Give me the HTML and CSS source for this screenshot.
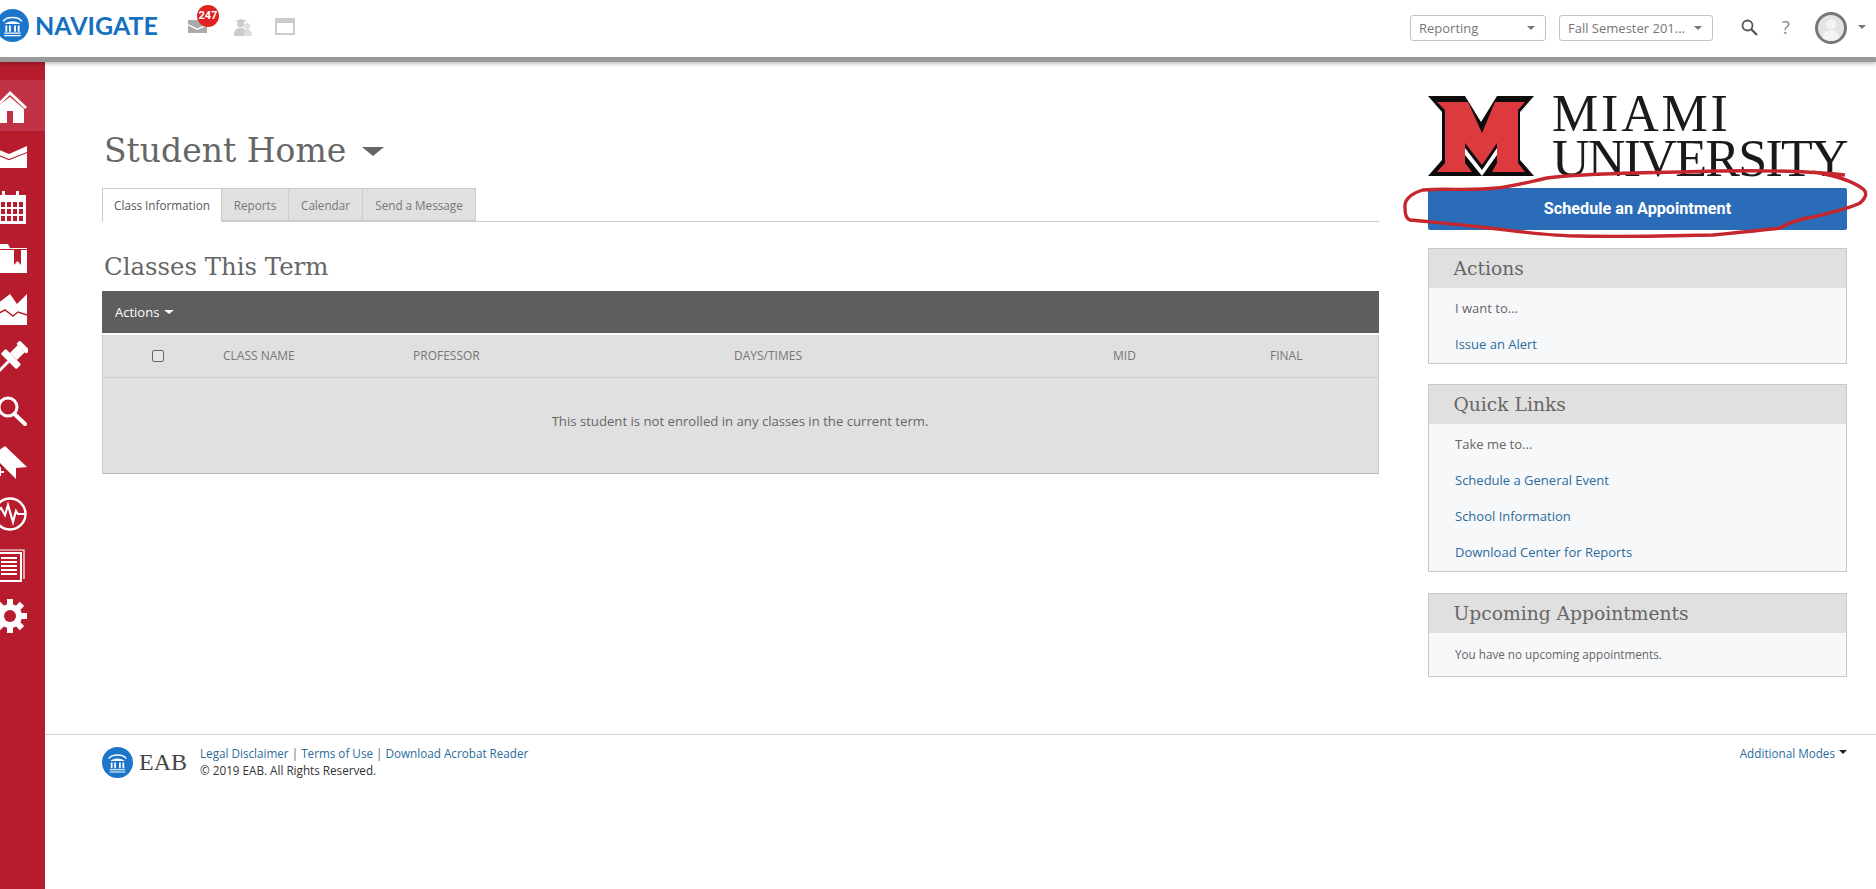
FILE: index.html
```html
<!DOCTYPE html>
<html lang="en">
<head>
<meta charset="utf-8">
<title>Navigate - Student Home</title>
<link rel="stylesheet" href="styles.css">
</head>
<body>
<svg class="defs" width="0" height="0">
  <symbol id="bank" viewBox="0 0 32 32">
    <circle cx="16" cy="16" r="16" fill="#1b75c9"/>
    <path d="M7 12C10 7 22 7 25 12" fill="none" stroke="#fff" stroke-width="1.5"/>
    <path d="M8.500 14.500C12 11 20 11 23.500 14.500Z" fill="#fff"/>
    <path d="M10 16v6M13.500 16v6M18.500 16v6M22 16v6" stroke="#fff" stroke-width="1.800"/>
    <path d="M8 23.500h16M8 25.800h16" stroke="#fff" stroke-width="1.200"/>
  </symbol>
</svg>

<header class="topbar">
  <div class="brand">
    <svg class="brand-mark"><use href="#bank"/></svg>
    <span class="brand-name">NAVIGATE</span>
  </div>
  <div class="top-icons">
    <div class="mail">
      <svg class="mail-icon" viewBox="0 0 19 13"><path d="M0 0H19V4L9.500 8.500 0 4Z" fill="#aaa"/><path d="M0 5.500L9.500 10 19 5.500V13H0Z" fill="#aaa"/></svg>
      <span class="badge">247</span>
    </div>
    <svg class="people-icon" viewBox="0 0 18 18">
      <circle cx="6.500" cy="6" r="3.500" fill="#ccc"/><path d="M0 18c0-6 2-8 6.500-8S12 12 12 18Z" fill="#ccc"/>
      <circle cx="13" cy="8" r="3" fill="#ddd"/><path d="M10 18c0-5 1-7 3-7s5 2 5 7Z" fill="#ddd"/>
      <path d="M1 3L7 1l6 2-6 2Z" fill="#ccc"/>
    </svg>
    <div class="window-icon"></div>
  </div>
  <div class="top-right">
    <div class="select select-a"><span>Reporting</span><i class="caret"></i></div>
    <div class="select select-b"><span>Fall Semester 201...</span><i class="caret"></i></div>
    <svg class="search-icon" viewBox="0 0 17 17"><circle cx="6.500" cy="6.500" r="5" fill="none" stroke="#555" stroke-width="1.800"/><path d="M10.500 10.500L16 16" stroke="#555" stroke-width="2.400"/></svg>
    <span class="help">?</span>
    <div class="avatar"><svg viewBox="0 0 25 25"><circle cx="12.500" cy="9" r="5" fill="#f4f4f4"/><path d="M4 25c0-8 4-10 8.500-10S21 17 21 25Z" fill="#f4f4f4"/></svg></div>
    <i class="caret caret-user"></i>
  </div>
</header>

<div class="shell">
  <nav class="sidebar">
    <a class="side-item active"><svg viewBox="-8 -20 36 40"><path d="M-4 -1L10 -15 27 1 25 3 10 -11 -4 2Z" fill="#fff"/><path d="M-8 4L10 -9 24 3V17H13V5H7V17H-8Z" fill="#fff"/></svg></a>
    <a class="side-item"><svg viewBox="-8 -20 36 40"><path d="M-8 -10L9 -3 27 -11V-5L9 2-8 -5Z" fill="#fff"/><path d="M-8 -4L9 3.200 27 -4V11H-8Z" fill="#fff"/></svg></a>
    <a class="side-item"><svg viewBox="-8 -20 36 40"><path d="M-8 -13H26V16H-8Z" fill="#fff"/><path d="M2 -17h3v6h-3ZM16 -17h3v6h-3Z" fill="#fff"/><path class="cut" d="M1 -6h4v5H1ZM7 -6h4v5H7ZM13 -6h4v5h-4ZM19 -6h4v5h-4ZM1 1h4v5H1ZM7 1h4v5H7ZM13 1h4v5h-4ZM19 1h4v5h-4ZM1 8h4v5H1ZM7 8h4v5H7ZM13 8h4v5h-4ZM19 8h4v5h-4Z"/></svg></a>
    <a class="side-item"><svg viewBox="-8 -20 36 40"><path d="M-8 -15H8L10 -11H27V14H-8Z" fill="#fff"/><path class="cut" d="M-8 -10H27V-9H-8ZM14 -9H21V6L17.500 2 14 6Z"/></svg></a>
    <a class="side-item"><svg viewBox="-8 -20 36 40"><path d="M-8 -2L10 -16 17 -6 27 -16V15H-8Z" fill="#fff"/><path d="M-8 7L5 0 13 6 18 2 27 5" fill="none" stroke="#b71c2e" stroke-width="1.500"/></svg></a>
    <a class="side-item"><svg viewBox="-8 -20 36 40"><g transform="rotate(45 12 -3)"><rect x="5" y="-21" width="14" height="5" rx="1.500" fill="#fff"/><rect x="7" y="-16" width="10" height="11" fill="#fff"/><rect x="1" y="-5" width="22" height="7" rx="1.500" fill="#fff"/><rect x="10.500" y="2" width="3" height="17" fill="#fff"/></g></svg></a>
    <a class="side-item"><svg viewBox="-8 -20 36 40"><circle cx="8" cy="-5" r="9" fill="none" stroke="#fff" stroke-width="3"/><path d="M14.500 2L25 12" stroke="#fff" stroke-width="4" stroke-linecap="round"/></svg></a>
    <a class="side-item"><svg viewBox="-8 -20 36 40"><path d="M5 -17L27 4 16 5V16L-8 -8Z" fill="#fff"/><path d="M-4 8h8v2h-8ZM-1 4h2v9h-2Z" fill="#fff"/></svg></a>
    <a class="side-item"><svg viewBox="-8 -20 36 40"><circle cx="10" cy="0" r="15.500" fill="none" stroke="#fff" stroke-width="2.400"/><path d="M-5 -1L1 -6 5 1 8 -9 13 8 16 -3 18 0H25" fill="none" stroke="#fff" stroke-width="2.200"/></svg></a>
    <a class="side-item"><svg viewBox="-8 -20 36 40"><path d="M-4 -15H24V14" fill="none" stroke="#fff" stroke-width="1.200"/><rect x="-4" y="-12" width="25" height="28" fill="none" stroke="#fff" stroke-width="2"/><path d="M1 -7H17M1 -3H17M1 1H17M1 5H17M1 9H17" stroke="#fff" stroke-width="2"/></svg></a>
    <a class="side-item"><svg viewBox="-8 -20 36 40"><g fill="#fff"><circle cx="10" cy="0" r="12"/><rect x="7" y="-17" width="6" height="34"/><rect x="7" y="-17" width="6" height="34" transform="rotate(45 10 0)"/><rect x="7" y="-17" width="6" height="34" transform="rotate(90 10 0)"/><rect x="7" y="-17" width="6" height="34" transform="rotate(135 10 0)"/></g><circle class="cut" cx="10" cy="0" r="6"/></svg></a>
  </nav>

  <div class="page">
    <div class="content">
      <main class="primary">
        <h1 class="page-title">Student Home <i class="title-caret"></i></h1>
        <div class="tabs">
          <a class="tab tab-on tab-1">Class Information</a>
          <a class="tab tab-2">Reports</a>
          <a class="tab tab-3">Calendar</a>
          <a class="tab tab-4">Send a Message</a>
        </div>
        <h2 class="section-title">Classes This Term</h2>
        <div class="actions-bar"><span>Actions</span><i class="caret caret-white"></i></div>
        <div class="table">
          <div class="table-head">
            <span class="check-cell"><i class="checkbox"></i></span>
            <span>CLASS NAME</span>
            <span>PROFESSOR</span>
            <span>DAYS/TIMES</span>
            <span>MID</span>
            <span>FINAL</span>
          </div>
          <div class="table-empty">This student is not enrolled in any classes in the current term.</div>
        </div>
      </main>

      <aside class="aside">
        <div class="school-logo">
          <svg class="school-m" viewBox="0 0 106 80">
            <path d="M0 0H37L53 26 69 0H106L92 16V64L106 80H0L14 64V16Z" fill="#0c0c0c"/>
            <path d="M9 6H40L54 37 67 6H97L90 14V67L97 76H64L69 67V47L54 69 37 47V67L44 76H9L17 67V14Z" fill="#dd3a40"/>
            <path d="M37 52L54 74 69 52V59L54 80 37 59Z" fill="#fff"/>
          </svg>
          <div class="school-name"><span>MIAMI</span><span class="uni">UNIVERSITY</span></div>
        </div>
        <a class="primary-btn">Schedule an Appointment</a>
        <section class="panel">
          <h3>Actions</h3>
          <div class="panel-body"><p>I want to...</p><p><a>Issue an Alert</a></p></div>
        </section>
        <section class="panel">
          <h3>Quick Links</h3>
          <div class="panel-body"><p>Take me to...</p><p><a>Schedule a General Event</a></p><p><a>School Information</a></p><p><a>Download Center for Reports</a></p></div>
        </section>
        <section class="panel panel-last">
          <h3>Upcoming Appointments</h3>
          <div class="panel-body"><p class="small">You have no upcoming appointments.</p></div>
        </section>
      </aside>
    </div>

    <footer class="footer">
      <svg class="footer-mark"><use href="#bank"/></svg>
      <span class="footer-eab">EAB</span>
      <div class="footer-text">
        <div><a>Legal Disclaimer</a> <span class="pipe">|</span> <a>Terms of Use</a> <span class="pipe">|</span> <a>Download Acrobat Reader</a></div>
        <div class="copy">© 2019 EAB. All Rights Reserved.</div>
      </div>
      <div class="modes"><a>Additional Modes</a><i class="caret caret-black"></i></div>
    </footer>
  </div>
</div>

<svg class="scribble" viewBox="0 0 1876 889">
  <path d="M1845 175C1800 170 1740 170 1680 172C1620 173 1575 174 1547 178C1525 183 1510 187 1497 188C1470 191 1445 188 1423 190C1410 194 1404 200 1405 208C1405 215 1406 219 1410 220C1430 222 1455 224 1480 227C1510 230 1545 236 1580 236C1625 237 1670 236 1713 235C1745 232 1765 230 1780 228C1790 222 1800 219 1813 217C1830 213 1850 208 1860 203C1867 197 1867 192 1863 189C1855 183 1840 176 1813 172" fill="none" stroke="#c5272d" stroke-width="3.400"/>
</svg>
</body>
</html>
```
FILE: styles.css
```css
* { box-sizing: border-box; }
html, body { margin: 0; height: 100%; }
body {
  position: relative;
  height: 889px;
  overflow: hidden;
  display: flex;
  flex-direction: column;
  background: #fff;
  color: #666;
  font-family: "Open Sans", "Liberation Sans", sans-serif;
  font-size: 13px;
}
a { color: #2c6c9c; text-decoration: none; }
i { display: inline-block; }
.defs { position: absolute; }

.topbar {
  position: relative;
  z-index: 2;
  flex: none;
  height: 62px;
  display: flex;
  align-items: flex-start;
  background: #fff;
  border-bottom: 5px solid #999;
  box-shadow: 0 2px 4px rgba(0,0,0,.25);
}
.brand { display: flex; align-items: center; margin: 9px 0 0 -4px; }
.brand-mark { width: 33px; height: 33px; }
.brand-name {
  margin-left: 6px;
  color: #1471c0;
  font-family: "Lato", sans-serif;
  font-weight: 700;
  font-size: 25px;
  line-height: 33px;
}
.top-icons { display: flex; align-items: flex-start; margin-left: 30px; }
.mail { position: relative; width: 19px; height: 32px; }
.mail-icon { position: absolute; left: 0; top: 20px; width: 19px; height: 13px; }
.badge {
  position: absolute;
  left: 9px;
  top: 5px;
  width: 22px;
  height: 22px;
  border-radius: 50%;
  background: #dc2222;
  color: #fff;
  font-family: "Roboto", sans-serif;
  font-weight: 700;
  font-size: 11px;
  line-height: 22px;
  text-align: center;
}
.people-icon { width: 18px; height: 18px; margin: 18px 0 0 27px; }
.window-icon {
  width: 20px;
  height: 17px;
  margin: 18px 0 0 23px;
  border: 2px solid #ccc;
  border-top-width: 5px;
}
.top-right { display: flex; align-items: flex-start; margin-left: auto; }
.select {
  display: flex;
  align-items: center;
  justify-content: space-between;
  height: 26px;
  margin-top: 15px;
  padding: 0 10px 0 8px;
  border: 1px solid #c4c4c4;
  border-radius: 3px;
  color: #777;
  font-size: 13px;
  white-space: nowrap;
}
.select-a { width: 136px; }
.select-b { width: 154px; margin-left: 13px; }
.caret {
  width: 0;
  height: 0;
  border-left: 4px solid transparent;
  border-right: 4px solid transparent;
  border-top: 4px solid #777;
}
.search-icon { width: 17px; height: 17px; margin: 19px 0 0 28px; }
.help { margin: 15px 0 0 24px; width: 15px; color: #888; font-size: 18px; line-height: 25px; }
.avatar {
  width: 32px;
  height: 32px;
  margin: 12px 0 0 18px;
  border: 3px solid #777;
  border-radius: 50%;
  background: #e4e4e4;
  overflow: hidden;
}
.avatar svg { display: block; width: 26px; height: 26px; }
.caret-user { margin: 25px 10px 0 11px; }

.shell { flex: 1; display: flex; min-height: 0; }
.sidebar {
  flex: none;
  width: 45px;
  padding-top: 19px;
  background: #b71c2e;
  margin-top: -1px;
  overflow: hidden;
}
.side-item { display: flex; align-items: center; height: 51px; }
.side-item svg { flex: none; width: 36px; height: 40px; margin-left: -8px; }
.side-item.active { background: #c03245; }
.side-item.active .cut { fill: #c03245; }
.cut { fill: #b71c2e; }

.page { flex: 1; display: flex; flex-direction: column; min-width: 0; }
.content { display: flex; height: 672px; }
.primary { width: 1277px; margin-left: 57px; padding-top: 67px; }
.page-title {
  margin: 0 0 15px;
  padding-left: 2px;
  color: #666;
  font-family: "DejaVu Serif", serif;
  font-weight: 400;
  font-size: 33px;
  line-height: 44px;
  display: flex;
  align-items: center;
}
.title-caret {
  margin-left: 16px;
  border-left: 11px solid transparent;
  border-right: 11px solid transparent;
  border-top: 9px solid #666;
}
.tabs { display: flex; height: 34px; border-bottom: 1px solid #ccc; }
.tab {
  height: 33px;
  display: flex;
  align-items: center;
  justify-content: center;
  background: #e0e0e0;
  border: 1px solid #ccc;
  border-left: 0;
  color: #777;
  font-size: 11.700px;
}
.tab-on { background: #fff; color: #555; border-left: 1px solid #ccc; border-bottom: 0; height: 34px; padding-bottom: 1px; }
.tab-1 { width: 120px; }
.tab-2 { width: 67px; }
.tab-3 { width: 74px; }
.tab-4 { width: 113px; }
.section-title {
  margin: 30px 0 9px;
  padding-left: 2px;
  color: #666;
  font-family: "DejaVu Serif", serif;
  font-weight: 400;
  font-size: 24.400px;
  line-height: 30px;
}
.actions-bar {
  height: 42px;
  display: flex;
  align-items: center;
  gap: 5px;
  padding-left: 13px;
  background: #5e5e5e;
  color: #fff;
  font-size: 13px;
}
.caret-white { border-top-color: #fff; border-left-width: 5px; border-right-width: 5px; }
.table {
  margin-top: 2px;
  background: #e0e0e0;
  border: 1px solid #ccc;
  border-top: 0;
  border-bottom: 1px solid #bbb;
}
.table-head {
  height: 43px;
  padding-bottom: 1px;
  display: grid;
  grid-template-columns: 120px 190px 321px 379px 157px 1fr;
  align-items: center;
  border-bottom: 1px solid #ccc;
  color: #777;
  font-size: 12px;
}
.check-cell { padding-left: 49px; display: flex; }
.checkbox {
  width: 12px;
  height: 12px;
  border: 1px solid #666;
  border-radius: 2px;
  background: #e6e6e6;
}
.table-empty {
  height: 95px;
  padding-top: 33px;
  padding-right: 1px;
  text-align: center;
  color: #666;
  font-size: 13.150px;
  line-height: 20px;
}

.aside { width: 419px; margin-left: 49px; padding-top: 34px; }
.school-logo { display: flex; height: 80px; margin-bottom: 12px; }
.school-m { flex: none; width: 106px; height: 80px; }
.school-name {
  display: flex;
  flex-direction: column;
  margin: -5px 0 0 18px;
  color: #1a1a1a;
  font-family: "Liberation Serif", serif;
  font-size: 52px;
  line-height: 45px;
  letter-spacing: 2.800px;
  white-space: nowrap;
}
.school-name .uni { letter-spacing: -1.700px; }
.primary-btn {
  display: block;
  height: 42px;
  margin-bottom: 18px;
  border-radius: 2px;
  background: #2b6cb8;
  color: #fff;
  font-family: "Roboto", sans-serif;
  font-weight: 700;
  font-size: 16.200px;
  line-height: 42px;
  text-align: center;
}
.panel { margin-bottom: 20px; border: 1px solid #c8c8c8; background: #f7f8fa; }
.panel h3 {
  margin: 0;
  height: 39px;
  padding-left: 24.500px;
  background: #e0e0e0;
  color: #666;
  font-family: "DejaVu Serif", serif;
  font-weight: 400;
  font-size: 18.700px;
  line-height: 39px;
}
.panel-body { padding: 2px 0 1px 26px; }
.panel-body p { margin: 0; font-size: 13px; line-height: 36px; color: #666; }
.panel-body p.small { font-size: 11.700px; }
.panel-last { margin-top: 21px; }
.panel-last .panel-body { padding-top: 3px; padding-bottom: 4px; }

.footer {
  flex: none;
  position: relative;
  display: flex;
  align-items: flex-start;
  padding: 12px 10px 0 57px;
  border-top: 1px solid #d4d4d4;
}
.footer-mark { width: 31px; height: 31px; }
.footer-eab {
  margin-left: 6px;
  color: #444;
  font-family: "Liberation Serif", serif;
  font-size: 24px;
  line-height: 31px;
}
.footer-text { margin-left: 13px; margin-top: -2px; font-size: 11.700px; line-height: 17px; }
.pipe { color: #666; }
.copy { color: #333; }
.modes { margin-left: auto; margin-top: -2px; padding-right: 19px; display: flex; align-items: center; gap: 4px; font-size: 11.700px; line-height: 17px; }
.caret-black { border-top-color: #222; margin-top: -3px; }

.scribble { position: absolute; left: 0; top: 0; width: 1876px; height: 889px; pointer-events: none; z-index: 3; }
```
